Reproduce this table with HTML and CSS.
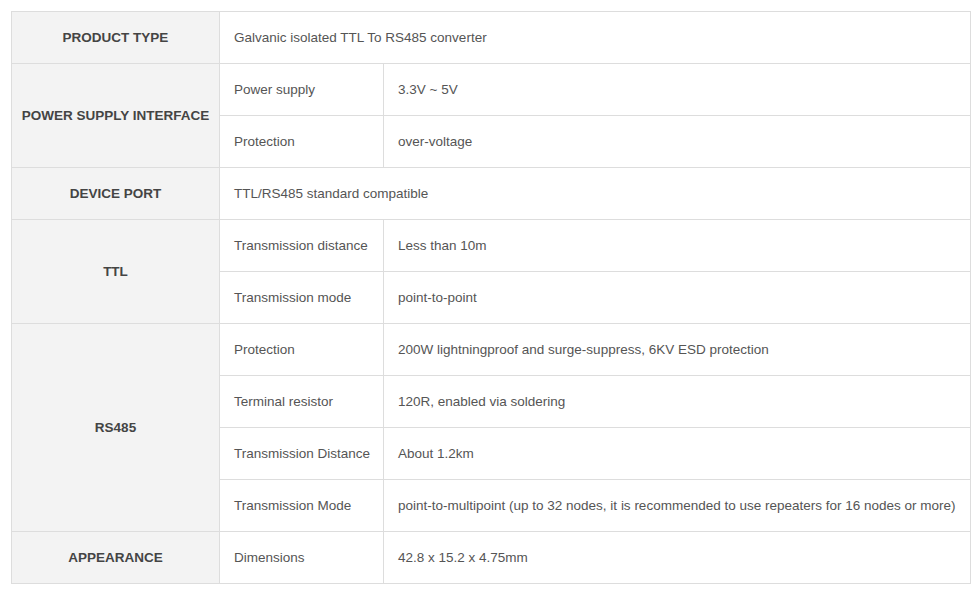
FILE: index.html
```html
<!DOCTYPE html>
<html>
<head>
<meta charset="utf-8">
<link rel="stylesheet" href="styles.css">
</head>
<body>
<table class="spec">
  <colgroup><col class="c1"><col class="c2"><col class="c3"></colgroup>
  <tr><th>PRODUCT TYPE</th><td colspan="2">Galvanic isolated TTL To RS485 converter</td></tr>
  <tr><th rowspan="2">POWER SUPPLY INTERFACE</th><td>Power supply</td><td>3.3V ~ 5V</td></tr>
  <tr><td>Protection</td><td>over-voltage</td></tr>
  <tr><th>DEVICE PORT</th><td colspan="2">TTL/RS485 standard compatible</td></tr>
  <tr><th rowspan="2">TTL</th><td>Transmission distance</td><td>Less than 10m</td></tr>
  <tr><td>Transmission mode</td><td>point-to-point</td></tr>
  <tr><th rowspan="4">RS485</th><td>Protection</td><td>200W lightningproof and surge-suppress, 6KV ESD protection</td></tr>
  <tr><td>Terminal resistor</td><td>120R, enabled via soldering</td></tr>
  <tr><td>Transmission Distance</td><td>About 1.2km</td></tr>
  <tr><td>Transmission Mode</td><td>point-to-multipoint (up to 32 nodes, it is recommended to use repeaters for 16 nodes or more)</td></tr>
  <tr><th>APPEARANCE</th><td>Dimensions</td><td>42.8 x 15.2 x 4.75mm</td></tr>
</table>
</body>
</html>
```
FILE: styles.css
```css
html, body { margin: 0; padding: 0; background: #fff; }
body { padding: 11px; font-family: "Liberation Sans", Arial, sans-serif; font-size: 13.5px; color: #555; }
.spec { border-collapse: collapse; table-layout: fixed; width: 960px; }
.spec .c1 { width: 208px; }
.spec .c2 { width: 164px; }
.spec th, .spec td { border: 1px solid #ddd; height: 52px; padding: 0 14px; vertical-align: middle; box-sizing: border-box; white-space: nowrap; }
.spec th { background: #f3f3f3; color: #444; font-weight: bold; text-align: center; padding: 0 4px; }
.spec td { text-align: left; }
```
